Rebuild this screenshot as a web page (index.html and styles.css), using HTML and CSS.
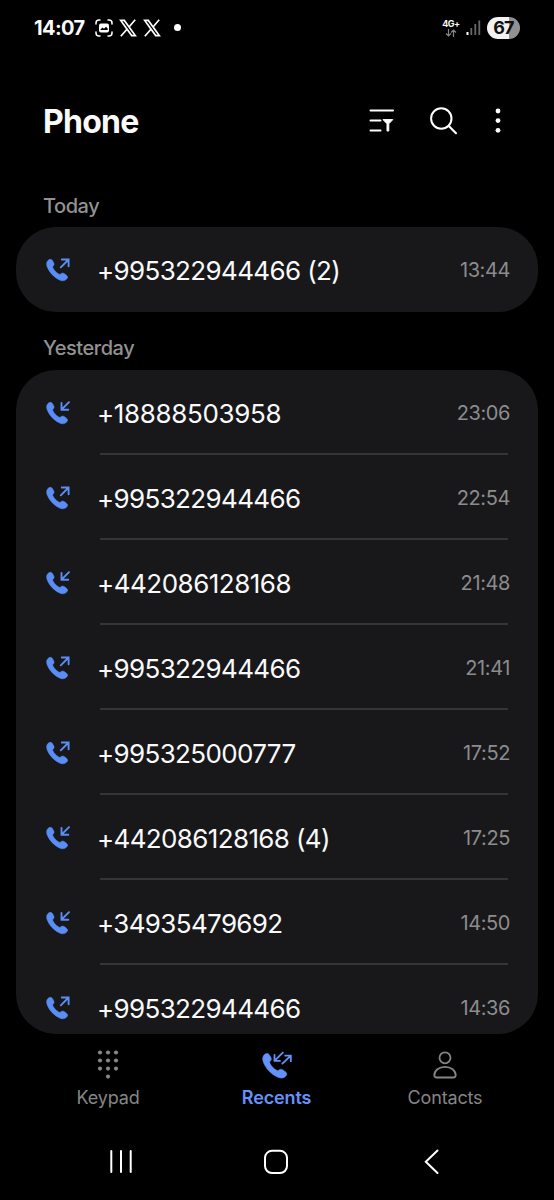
FILE: index.html
```html
<!DOCTYPE html>
<html lang="en">
<head>
<meta charset="utf-8">
<title>Phone</title>
<link rel="stylesheet" href="styles.css">
</head>
<body>
<svg class="defs" width="0" height="0">
  <symbol id="handset" viewBox="0 0 24 24"><path fill="currentColor" stroke="currentColor" stroke-width=".5" stroke-linejoin="round" d="M2 2.4C3.6.9 5.4 1 6.5 2.6L7.7 4.7C8.4 6 8.2 7 7.3 7.9C6.6 8.6 6.6 9.2 7 10C8.2 12.4 10.2 14.5 12.8 16C13.6 16.5 14.2 16.3 14.9 15.7C15.9 14.9 17 14.8 18.2 15.6L20.2 17C21.9 18.2 22 19.8 20.7 21.1C18.8 23 16.4 23.3 13.5 21.9C8 19.3 3.6 14.8 1.3 9.2C.2 6.4.4 4 2 2.4Z"/></symbol>
  <symbol id="out" viewBox="0 0 24 24"><use href="#handset" width="24" height="24"/><path fill="none" stroke="currentColor" stroke-width="1.9" stroke-linecap="round" d="M14.8 9.3L22.6 1.5M15.8 1.5H22.6V8.2"/></symbol>
  <symbol id="in" viewBox="0 0 24 24"><use href="#handset" width="24" height="24"/><path fill="none" stroke="currentColor" stroke-width="1.9" stroke-linecap="round" d="M23 1.2L15.5 8.7M15.5 2V8.7H22.3"/></symbol>
  <symbol id="x" viewBox="0 0 18 18"><path fill="none" stroke="#fff" stroke-width="1.7" d="M1.7 1.4H5.3L16.3 16.6H12.7ZM16.2 .8L10 8M8.2 10L1.8 17.2"/></symbol>
</svg>
<div class="screen">
  <header class="status">
    <span class="clock">14:07</span>
    <svg class="capture" width="18" height="18" viewBox="0 0 18 18"><path fill="none" stroke="#fff" stroke-width="1.5" stroke-linecap="round" d="M1 5V4Q1 1 4 1H5M13 1H14Q17 1 17 4V5M17 13V14Q17 17 14 17H13M5 17H4Q1 17 1 14V13"/><rect x="4" y="4.5" width="10" height="9" rx="2" fill="#fff"/><path d="M5.5 10.5L7.5 8.5L9 9.8L11 7.7L12.7 9.6V11H5.5Z" fill="#000"/></svg>
    <svg class="xlogo" width="18" height="18"><use href="#x"/></svg>
    <svg class="xlogo second" width="18" height="18"><use href="#x"/></svg>
    <i class="dot"></i>
    <div class="network"><b>4G+</b><svg width="12" height="8" viewBox="0 0 12 8"><path fill="none" stroke="#858585" stroke-width="1.2" d="M3.5 0V7M1 4.5L3.5 7L6 4.5M8.5 8V1M6 3.5L8.5 1L11 3.5"/></svg></div>
    <svg class="signal" width="15" height="16" viewBox="0 0 15 16"><path stroke="#fff" stroke-width="2" d="M1.5 12V15"/><path stroke="#686868" stroke-width="1.8" d="M5.3 8V15M9.3 4V15M13.3 .5V15"/></svg>
    <div class="battery">67</div>
  </header>
  <div class="appbar">
    <h1>Phone</h1>
    <svg class="filter" width="25" height="24" viewBox="0 0 25 24"><path stroke="#fff" stroke-width="2" stroke-linecap="round" d="M1.5 1.5H24M1.5 11.5H11.5M1.5 21.5H11.5"/><path fill="#fff" stroke="#fff" stroke-linejoin="round" d="M14 10.6H23.8L19.8 14.8V22H18V14.8Z"/></svg>
    <svg class="search" width="28" height="28" viewBox="0 0 28 28"><circle cx="11.3" cy="11.5" r="10.2" fill="none" stroke="#fff" stroke-width="2"/><path stroke="#fff" stroke-width="2.1" stroke-linecap="round" d="M18.8 19L26 26.2"/></svg>
    <svg class="more" width="6" height="26" viewBox="0 0 6 26"><g fill="#fff"><circle cx="3" cy="3" r="2.4"/><circle cx="3" cy="12.6" r="2.4"/><circle cx="3" cy="22.3" r="2.4"/></g></svg>
  </div>
  <h2 class="today">Today</h2>
  <ul class="card">
    <li><svg class="call"><use href="#out"/></svg><span class="number">+995322944466 (2)</span><time>13:44</time></li>
  </ul>
  <h2 class="yesterday">Yesterday</h2>
  <ul class="card log">
    <li><svg class="call"><use href="#in"/></svg><span class="number wide">+18888503958</span><time>23:06</time></li>
    <li><svg class="call"><use href="#out"/></svg><span class="number">+995322944466</span><time>22:54</time></li>
    <li><svg class="call"><use href="#in"/></svg><span class="number even">+442086128168</span><time>21:48</time></li>
    <li><svg class="call"><use href="#out"/></svg><span class="number">+995322944466</span><time>21:41</time></li>
    <li><svg class="call"><use href="#out"/></svg><span class="number">+995325000777</span><time>17:52</time></li>
    <li><svg class="call"><use href="#in"/></svg><span class="number">+442086128168 (4)</span><time>17:25</time></li>
    <li><svg class="call"><use href="#in"/></svg><span class="number">+34935479692</span><time>14:50</time></li>
    <li><svg class="call"><use href="#out"/></svg><span class="number">+995322944466</span><time>14:36</time></li>
  </ul>
  <nav class="tabs">
    <div class="tab"><svg width="30" height="30" viewBox="0 0 30 30"><g fill="#858585"><circle cx="7" cy="3.5" r="2.1"/><circle cx="15" cy="3.5" r="2.1"/><circle cx="23" cy="3.5" r="2.1"/><circle cx="7" cy="11.5" r="2.1"/><circle cx="15" cy="11.5" r="2.1"/><circle cx="23" cy="11.5" r="2.1"/><circle cx="7" cy="19.6" r="2.1"/><circle cx="15" cy="19.6" r="2.1"/><circle cx="23" cy="19.6" r="2.1"/><circle cx="15" cy="27.6" r="2.1"/></g></svg><span>Keypad</span></div>
    <div class="tab active"><svg width="30" height="30" viewBox="0 0 30 30"><use href="#handset" x="0" y="3" width="27.5" height="27.5"/><path fill="none" stroke="currentColor" stroke-width="1.8" stroke-linecap="round" d="M20.8 3.6L12.5 11.8M12.5 6V11.8H18M20.4 14.6L28.8 6.6M23.2 6.6H28.8V12.2"/></svg><span>Recents</span></div>
    <div class="tab"><svg width="30" height="30" viewBox="0 0 30 30"><g fill="none" stroke="#858585" stroke-width="1.8"><circle cx="15" cy="8.8" r="5.5"/><path d="M4.3 26.3C4.3 21.5 9 17.8 15 17.8S25.7 21.5 25.7 26.3Q25.7 28.5 23.3 28.5H6.7Q4.3 28.5 4.3 26.3Z"/></g></svg><span>Contacts</span></div>
  </nav>
  <footer class="system">
    <svg width="26" height="26" viewBox="0 0 26 26"><path stroke="#fff" stroke-width="2" stroke-linecap="round" d="M3.3 2V23M13 2V23M22.7 2V23"/></svg>
    <svg width="26" height="26" viewBox="0 0 26 26"><rect x="1" y="1.8" width="22" height="22.2" rx="7" fill="none" stroke="#fff" stroke-width="2"/></svg>
    <svg width="26" height="26" viewBox="0 0 26 26"><path fill="none" stroke="#fff" stroke-width="2" stroke-linecap="round" d="M17.5 1.5L5.8 12.8L17.5 24"/></svg>
  </footer>
</div>
</body>
</html>
```
FILE: styles.css
```css
* { box-sizing: border-box; }
body { margin: 0; background: #000; color: #fafafa; font-family: Inter, Roboto, sans-serif; }
svg { display: block; flex: none; }
.defs { position: absolute; }
.screen { width: 554px; height: 1200px; display: flex; flex-direction: column; overflow: hidden; }
.status { height: 56px; flex: none; display: flex; align-items: center; padding: 0 34px 0 34px; }
.clock { width: 51px; font-size: 20px; font-weight: 700; letter-spacing: -.6px; white-space: nowrap; }
.capture { margin-left: 10px; }
.xlogo { margin-left: 6px; }
.dot { width: 7px; height: 7px; border-radius: 50%; background: #fff; margin-left: 13px; margin-top: -1px; }
.network { margin-left: auto; display: flex; flex-direction: column; align-items: center; gap: 1px; width: 18px; }
.network b { font-size: 9px; line-height: 9px; letter-spacing: -.5px; }
.signal { margin: -1px 6px 0 6px; }
.battery { width: 33px; height: 22px; margin: -1px 0 0; border-radius: 11px; background: linear-gradient(90deg, #f2f2f2 67%, #919191 67%); color: #111; font-size: 18px; font-weight: 700; line-height: 22px; text-align: center; letter-spacing: -.9px; }
.appbar { height: 130px; flex: none; display: flex; align-items: center; padding: 0 53px 0 43px; }
h1 { flex: 1; margin: 0; font-size: 32px; font-weight: 700; letter-spacing: -.75px; }
.filter { margin-right: 36px; }
.search { margin-right: 37px; }
h2 { margin: 0; padding: 0 43px; flex: none; font-size: 20px; font-weight: 500; color: #929292; letter-spacing: -.45px; }
.today { height: 41px; line-height: 40px; }
.yesterday { height: 58px; line-height: 72px; }
.card { list-style: none; margin: 0 16px; padding: 0; background: #18181a; border-radius: 40px; overflow: hidden; flex: none; }
.card li { display: flex; align-items: center; height: 85px; padding: 0 28px 0 30px; position: relative; }
.log { height: 664px; }
.log li:not(:last-child)::after { content: ""; position: absolute; left: 84px; right: 30px; bottom: 0; height: 2px; background: #353537; }
.call { width: 24px; height: 24px; color: #5a8df5; }
.number { margin-left: 27px; padding-top: 1px; font-size: 26px; letter-spacing: -.64px; white-space: nowrap; }
.even { letter-spacing: -.5px; }
.wide { letter-spacing: -.35px; }
time { margin-left: auto; padding-top: 1px; color: #8c8c8e; font-size: 20px; letter-spacing: -.4px; }
.tabs { height: 92px; flex: none; display: grid; grid-template-columns: 168px 169px 168px; padding: 15px 24px 0; }
.tab { display: flex; flex-direction: column; align-items: center; gap: 7px; color: #858585; font-size: 18px; line-height: 24px; letter-spacing: -.15px; }
.active { color: #6592fa; font-weight: 600; }
.system { height: 74px; flex: none; display: flex; justify-content: space-between; padding: 23px 108px; }
```
